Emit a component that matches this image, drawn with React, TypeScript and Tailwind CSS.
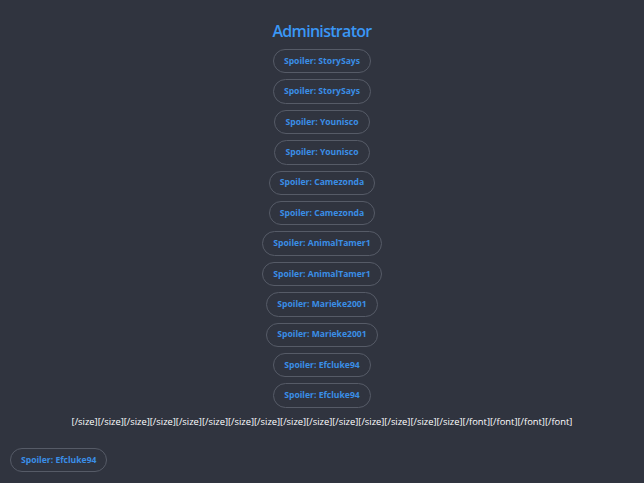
const names = ['StorySays', 'StorySays', 'Younisco', 'Younisco', 'Camezonda', 'Camezonda', 'AnimalTamer1', 'AnimalTamer1', 'Marieke2001', 'Marieke2001', 'Efcluke94', 'Efcluke94']

function Spoiler({ name }: { name: string }) {
  return (
    <button className="h-[24.4px] rounded-full border border-[#565b67] px-[10px] text-[8.6px] font-bold leading-none text-[#3a8ee6]">
      Spoiler: {name}
    </button>
  )
}

export default function App() {
  const closing = [...Array(15).fill('[/size]'), ...Array(4).fill('[/font]')].join('')
  return (
    <div className="min-h-[483px] bg-[#30343f] px-[10px] pt-[20px] font-['Open_Sans','Noto_Sans',sans-serif]">
      <div className="flex flex-col items-center">
        <h1 className="text-[16px] font-semibold leading-[22px] tracking-[-0.7px] text-[#3a97f5]">Administrator</h1>
        <div className="mt-[7px] flex flex-col items-center gap-[6px]">
          {names.map((n, i) => (
            <Spoiler key={i} name={n} />
          ))}
        </div>
        <p className="mt-[8px] text-[9.4px] leading-[12px] text-white">{closing}</p>
      </div>
      <div className="mt-[17px]">
        <Spoiler name="Efcluke94" />
      </div>
    </div>
  )
}
